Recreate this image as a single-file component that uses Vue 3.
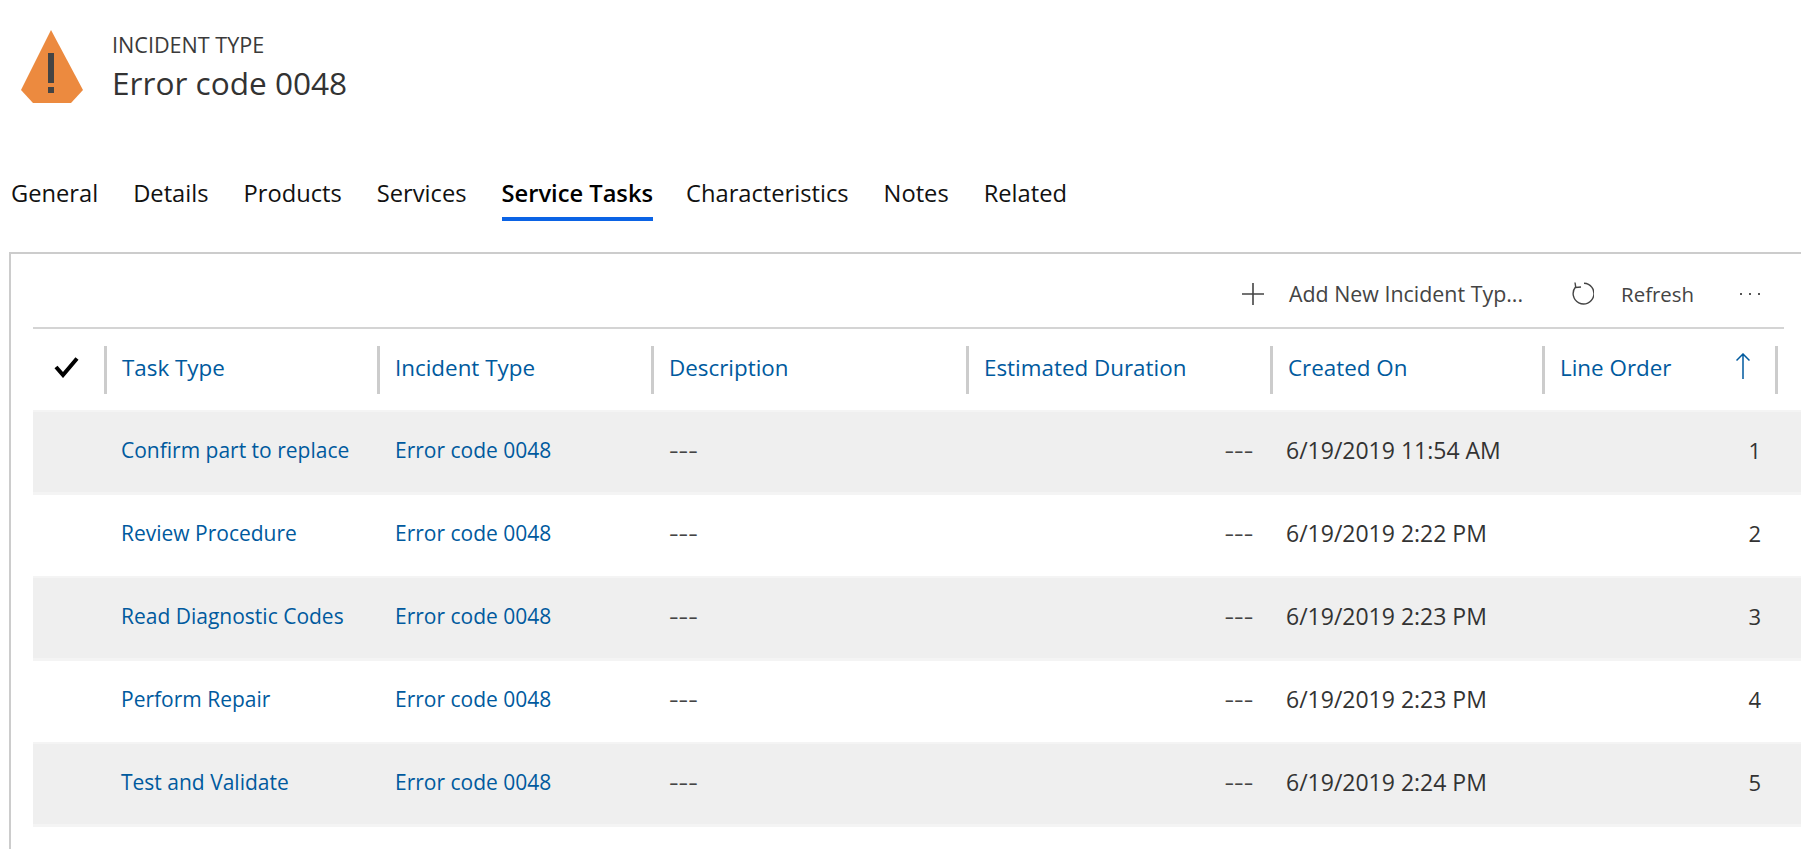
<script setup>
const tabs = ["General", "Details", "Products", "Services", "Service Tasks", "Characteristics", "Notes", "Related"];
const columns = ["Task Type", "Incident Type", "Description", "Estimated Duration", "Created On", "Line Order"];
const rows = [
  { task: "Confirm part to replace", created: "6/19/2019 11:54 AM", order: 1 },
  { task: "Review Procedure", created: "6/19/2019 2:22 PM", order: 2 },
  { task: "Read Diagnostic Codes", created: "6/19/2019 2:23 PM", order: 3 },
  { task: "Perform Repair", created: "6/19/2019 2:23 PM", order: 4 },
  { task: "Test and Validate", created: "6/19/2019 2:24 PM", order: 5 },
];
</script>

<template>
  <div class="page">
    <header class="head">
      <svg class="warn" width="63" height="73" viewBox="0 0 63 73">
        <path d="M30 0 L62 60 L50 73 L12 73 L0 60 Z" fill="#ec8a3f" />
        <rect x="27" y="23" width="6" height="30" fill="#444" />
        <rect x="27" y="57" width="6" height="6" fill="#444" />
      </svg>
      <div class="titles">
        <div class="kind">INCIDENT TYPE</div>
        <div class="name">Error code 0048</div>
      </div>
    </header>

    <nav class="tabs">
      <span v-for="tab in tabs" :key="tab" class="tab" :class="{ active: tab === 'Service Tasks' }">{{ tab }}</span>
    </nav>

    <section class="panel">
      <div class="toolbar">
        <span class="tool add">
          <svg width="22" height="22" viewBox="0 0 22 22"><path d="M11 0V22M0 11H22" stroke="#444" stroke-width="1.6" fill="none" /></svg>
          Add New Incident Typ...
        </span>
        <span class="tool refresh">
          <svg width="23" height="23" viewBox="0 0 23 23"><path d="M13 1.2 A10.4 10.4 0 1 1 4.5 5 M4 0.5 L4.8 5.5 L10 5" stroke="#444" stroke-width="1.4" fill="none" /></svg>
          Refresh
        </span>
        <svg class="more" width="20" height="2" viewBox="0 0 20 2"><path d="M0 0h2v2H0zM9 0h2v2H9zM18 0h2v2h-2z" fill="#555" /></svg>
      </div>

      <div class="grid-head">
        <div class="check">
          <svg width="26" height="21" viewBox="0 0 26 21"><path d="M2 10 L9 18 L23 1.5" stroke="#000" stroke-width="4" fill="none" /></svg>
        </div>
        <div v-for="col in columns" :key="col" class="col">
          {{ col }}
          <svg v-if="col === 'Line Order'" class="sort" width="14" height="26" viewBox="0 0 14 26"><path d="M7 26V1M0.5 7.5L7 1L13.5 7.5" stroke="#005a9e" stroke-width="1.5" fill="none" /></svg>
        </div>
      </div>

      <div v-for="row in rows" :key="row.order" class="row">
        <div class="cell task">{{ row.task }}</div>
        <div class="cell incident">Error code 0048</div>
        <div class="cell desc"><span class="dash">---</span></div>
        <div class="cell dur"><span class="dash">---</span></div>
        <div class="cell created">{{ row.created }}</div>
        <div class="cell order">{{ row.order }}</div>
      </div>
    </section>
  </div>
</template>

<style>
html, body { margin: 0; background: #fff; overflow: hidden; }
</style>

<style scoped>
.page {
  width: 1801px;
  height: 849px;
  overflow: hidden;
  font-family: "Open Sans", "Noto Sans", sans-serif;
  color: #333;
}
.head {
  display: flex;
  padding: 30px 0 0 21px;
  height: 146px;
  box-sizing: border-box;
}
.warn { flex: none; }
.titles { margin-left: 28px; }
.kind { font-size: 21.6px; line-height: 26px; margin-top: 2px; color: #3a3a3a; }
.name { font-size: 31.6px; line-height: 42px; margin-top: 4px; }
.tabs {
  display: flex;
  height: 106px;
  box-sizing: border-box;
  padding: 29px 0 0 11px;
  gap: 35px;
}
.tab { font-size: 23.7px; line-height: 36px; height: 46px; color: #111; box-sizing: border-box; }
.tab.active { font-weight: 600; color: #000; border-bottom: 4px solid #0b63e5; margin-right: -2px; }
.panel {
  margin-left: 9px;
  border-top: 2px solid #ccc;
  border-left: 2px solid #ccc;
  height: 597px;
  padding: 0 0 0 22px;
}
.toolbar {
  display: flex;
  align-items: center;
  justify-content: flex-end;
  width: 1751px;
  height: 75px;
  padding-top: 6px;
  border-bottom: 2px solid #d4d4d4;
  box-sizing: border-box;
  color: #444;
}
.tool { display: flex; align-items: center; }
.add { font-size: 21.4px; }
.add svg { margin-right: 25px; }
.refresh { font-size: 20.4px; margin-left: 48px; }
.refresh svg { margin-right: 27px; }
.more { margin: 0 24px 0 46px; }
.grid-head {
  display: grid;
  grid-template-columns: 71px 273px 274px 315px 304px 272px 236px;
  margin-top: 17px;
  height: 66px;
  font-size: 22.4px;
  color: #005a9e;
}
.check {
  display: flex;
  align-items: center;
  justify-content: center;
  height: 48px;
  box-sizing: border-box;
  padding: 0 3px 6px 0;
}
.col {
  position: relative;
  height: 48px;
  line-height: 44px;
  border-left: 3px solid #ccc;
  padding-left: 15px;
  box-sizing: border-box;
}
.col:last-child { border-right: 3px solid #ccc; }
.sort { position: absolute; right: 25px; top: 7px; }
.row {
  display: grid;
  grid-template-columns: 71px 273px 274px 315px 304px 272px 235px;
  height: 86px;
  padding-bottom: 4px;
  box-sizing: border-box;
  align-items: center;
  font-size: 21px;
}
.row:nth-child(odd) {
  height: 80px;
  background: #efefef;
  box-shadow: 0 -2px 0 #f4f4f4, 0 3px 0 #f4f4f4;
}
.cell { padding-left: 18px; }
.task { grid-column: 2; padding-left: 17px; }
.task, .incident { color: #005a9e; }
.desc, .dur { color: #444; }
.dash { display: inline-block; transform: scaleX(1.42); transform-origin: left center; }
.dur { text-align: right; padding-right: 17px; }
.dur .dash { transform-origin: right center; }
.created { font-size: 23px; padding-left: 16px; }
.order { font-size: 22px; text-align: right; padding-right: 16px; }
</style>
